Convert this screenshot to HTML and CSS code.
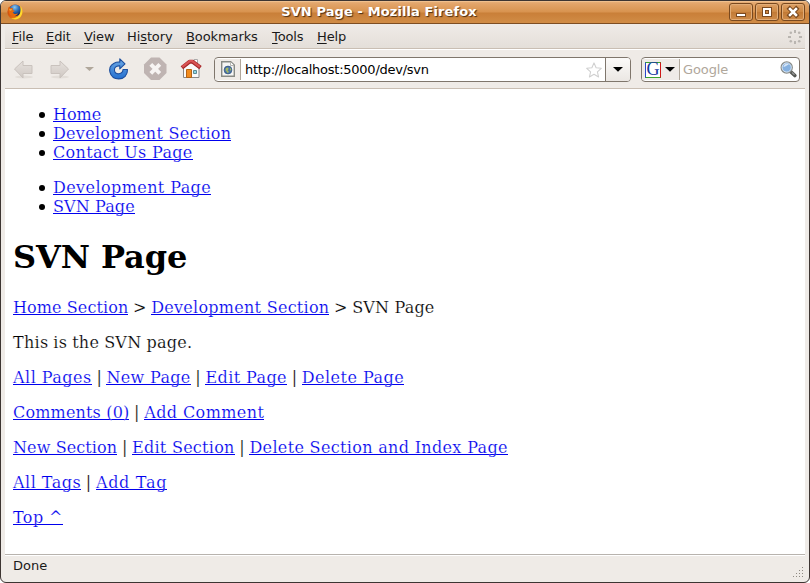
FILE: index.html
```
<!DOCTYPE html>
<html lang="en">
<head>
<meta charset="utf-8">
<title>SVN Page - Mozilla Firefox</title>
<link rel="stylesheet" href="styles.css">
</head>
<body>
<div class="window">
  <header class="titlebar">
    <svg class="app-icon" width="16" height="16" viewBox="0 0 16 16">
      <defs>
        <radialGradient id="globe" cx=".45" cy=".25" r=".7"><stop offset="0" stop-color="#8cc8f0"/><stop offset=".5" stop-color="#2f70b8"/><stop offset="1" stop-color="#12285e"/></radialGradient>
        <linearGradient id="fox" x1="0" y1="0" x2="1" y2="1"><stop offset="0" stop-color="#b83a10"/><stop offset=".5" stop-color="#e06010"/><stop offset="1" stop-color="#f4a010"/></linearGradient>
      </defs>
      <circle cx="8" cy="8" r="7.6" fill="url(#fox)"/>
      <circle cx="8.2" cy="6.3" r="5.9" fill="url(#globe)"/>
      <path d="M13.2 1.8C16 5 16.3 9.500 13.500 13C11 16 6.500 16 3.500 14C8 15 12.500 13 13.300 8C13.700 5.500 13.500 3.500 13.200 1.800Z" fill="#ffd92e"/>
      <path d="M1.600 2.800L3.200 4.200L6 4.100L5.500 6L8 7L5.800 8.200C6.500 10.200 8.700 10.500 11 9.200C9.500 13 4.500 13 2.500 10C1 7.500 1 5 1.600 2.800Z" fill="#e8690c"/>
      <path d="M2 5L5 4.900L4.600 6.200L3 7Z" fill="#f8a030"/>
    </svg>
    <div class="title">SVN Page - Mozilla Firefox</div>
    <div class="controls">
      <span class="control"><svg width="22" height="16" viewBox="0 0 22 16"><path d="M6 9h10v4H6z" fill="#7b4a20"/><path d="M7 10h8v2H7z" fill="#fff"/></svg></span>
      <span class="control"><svg width="22" height="16" viewBox="0 0 22 16"><path d="M6 3h10v10H6z" fill="#7b4a20"/><path fill="#fff" d="M7 4h8v8H7z"/><path fill="#7b4a20" d="M9 6h4v4H9z"/><path d="M10 7h2v2h-2z" fill="#cf8946"/></svg></span>
      <span class="control"><svg width="22" height="16" viewBox="0 0 22 16"><path d="M7.800 4.800l6.400 6.400m0-6.400l-6.400 6.400" stroke="#7b4a20" stroke-width="4.600" stroke-linecap="square"/><path d="M8 5l6 6m0-6l-6 6" stroke="#fff" stroke-width="2.500" stroke-linecap="square"/></svg></span>
    </div>
  </header>
  <nav class="menubar">
    <span class="menu m-file"><u>F</u>ile</span>
    <span class="menu m-edit"><u>E</u>dit</span>
    <span class="menu m-view"><u>V</u>iew</span>
    <span class="menu m-history">Hi<u>s</u>tory</span>
    <span class="menu m-bookmarks"><u>B</u>ookmarks</span>
    <span class="menu m-tools"><u>T</u>ools</span>
    <span class="menu m-help"><u>H</u>elp</span>
    <svg class="throbber" width="14" height="14" viewBox="0 0 14 14" fill="#b9b5b0">
      <rect x="6" y="0" width="2" height="3"/><rect x="6" y="11" width="2" height="3"/><rect x="0" y="6" width="3" height="2"/><rect x="11" y="6" width="3" height="2"/>
      <circle cx="2.800" cy="2.800" r="1.300"/><circle cx="11.200" cy="2.800" r="1.300"/><circle cx="2.800" cy="11.200" r="1.300"/><circle cx="11.200" cy="11.200" r="1.300"/>
    </svg>
  </nav>
  <div class="toolbar">
    <svg class="buttons" width="209" height="38" viewBox="0 0 209 38">
      <defs>
        <linearGradient id="reload" x1="0" y1="0" x2="0" y2="1"><stop offset="0" stop-color="#6da8e4"/><stop offset="1" stop-color="#2470d0"/></linearGradient>
        <linearGradient id="arrow" x1="0" y1="0" x2="0" y2="1"><stop offset="0" stop-color="#e6e1dd"/><stop offset="1" stop-color="#cfc8c3"/></linearGradient>
      </defs>
      <ellipse cx="19" cy="27" rx="9" ry="1.500" fill="#e2ddd8"/>
      <ellipse cx="55" cy="27" rx="9" ry="1.500" fill="#e2ddd8"/>
      <path d="M9.500 19L18 11v4.500h9v8h-9v4.500z" fill="url(#arrow)" stroke="#c9c2bd"/>
      <path d="M63.500 19L55 11v4.500h-9v8h9v4.500z" fill="url(#arrow)" stroke="#c9c2bd"/>
      <path d="M80 17h9l-4.500 4z" fill="#b0a79b"/>
      <path d="M114.800 8.800l5.200 5-5.200 5v-2.900c-4-.3-5.800 2.200-5.300 4.800.8 4.600 8.300 4 8.500-1.200h4.500c.2 5.600-3.500 9.400-8.700 9.400-10 0-11.700-12-5.100-15.500 1.800-1 4-1.500 6.100-1.300z" fill="url(#reload)" stroke="#1d4f9e" stroke-width="1.100" stroke-linejoin="round"/>
      <path d="M146 7.500h8.500l7 7V23l-7 7H146l-7-7v-8.500z" fill="#bfb4b2"/>
      <path d="M145.800 14.300l9 9m0-9l-9 9" stroke="#f7f4f3" stroke-width="4"/>
      <path d="M189 9.500h3.500V15H189z" fill="#fff" stroke="#aaa"/>
      <path d="M178.500 18l7.500-6 8 6v9.500h-15.500z" fill="#fafafa" stroke="#888"/>
      <path d="M176.900 17.700l7.600-6h3l8 6" fill="none" stroke="#a8292b" stroke-width="4" stroke-linejoin="round"/>
      <path d="M177.300 16.900l7.500-5.700h2.400l7.600 5.700" fill="none" stroke="#d95454" stroke-width="2.200"/>
      <path d="M181.500 19.500h5v8h-5z" fill="#f28c1e" stroke="#b56314"/>
      <path d="M188.500 20.500h3v3h-3z" fill="#8fd9e8" stroke="#5d8b94"/>
    </svg>
    <div class="address">
      <span class="site"><svg width="14" height="16" viewBox="0 0 14 16"><path d="M.7.700h9L13.300 4v11.300H.7z" fill="#f6f6f4" stroke="#888a85" stroke-width="1.400"/><path d="M9.500 1v3.500H13" fill="#fff" stroke="#b5b5b0"/><circle cx="7" cy="9" r="3.900" fill="#4c76a9" stroke="#2d4e78" stroke-width=".7"/><path d="M5 7l2-.5.7 1.500L6.500 9.300 8 11 6.500 12 4.500 9zM9 6.500l1.300 2L9 10z" fill="#a7b960"/></svg></span>
      <span class="url">http://localhost:5000/dev/svn</span>
      <svg class="star" width="16" height="16" viewBox="0 0 16 16"><path d="M8 .9l2.100 4.900 5.200.5-3.900 3.500 1.200 5.200L8 12.300 3.400 15l1.200-5.200L.7 6.300l5.200-.5z" fill="#fff" stroke="#d0d0d0" stroke-width="1.100" stroke-linejoin="round"/></svg>
      <span class="drop"><svg width="10" height="5" viewBox="0 0 10 5"><path d="M0 0h10L5 4.700z"/></svg></span>
    </div>
    <div class="search">
      <span class="engine">
        <span class="google">G</span>
        <svg width="10" height="5" viewBox="0 0 10 5"><path d="M0 0h10L5 4.700z"/></svg>
      </span>
      <span class="hint">Google</span>
      <svg class="lens" width="17" height="17" viewBox="0 0 17 17"><path d="M10.500 10.500l4.300 4" stroke="#555753" stroke-width="3.600" stroke-linecap="round"/><path d="M12 11.500l2.500 2.300" stroke="#999" stroke-width="1.200"/><circle cx="6.700" cy="6.500" r="5.600" fill="#86b1e0" stroke="#888a85" stroke-width="1.200"/><circle cx="6.700" cy="6.500" r="4.600" fill="none" stroke="#e9eef4" stroke-width=".8"/><path d="M3.500 6c.3-3 3.500-4 5.500-2.500C7 4 6 5.500 3.500 6z" fill="#d5e5f6"/></svg>
    </div>
  </div>
  <main class="page">
    <ul>
      <li><a href="#">Home</a></li>
      <li><a class="s3" href="#">Development Section</a></li>
      <li><a class="s4" href="#">Contact Us Page</a></li>
    </ul>
    <ul>
      <li><a class="s5" href="#">Development Page</a></li>
      <li><a class="s1" href="#">SVN Page</a></li>
    </ul>
    <h1>SVN Page</h1>
    <p><a class="s1" href="#">Home Section</a> &gt; <a class="s3" href="#">Development Section</a> &gt; <span class="s2">SVN Page</span></p>
    <p class="s3">This is the SVN page.</p>
    <p><a class="s6" href="#">All Pages</a> | <a class="s4" href="#">New Page</a> | <a class="s5" href="#">Edit Page</a> | <a class="s6" href="#">Delete Page</a></p>
    <p><a class="s2" href="#">Comments (0)</a> | <a class="s5" href="#">Add Comment</a></p>
    <p><a class="s1" href="#">New Section</a> | <a class="s3" href="#">Edit Section</a> | <a class="s4" href="#">Delete Section and Index Page</a></p>
    <p><a class="s6" href="#">All Tags</a> | <a class="s7" href="#">Add Tag</a></p>
    <p><a class="s5" href="#">Top ^</a></p>
  </main>
  <footer class="status">
    <span>Done</span>
    <svg class="grip" width="12" height="12" viewBox="0 0 12 12"><path d="M10 1h1v1h-1zM7 4h1v1H7zM10 4h1v1h-1zM4 7h1v1H4zM7 7h1v1H7zM10 7h1v1h-1zM1 10h1v1H1zM4 10h1v1H4zM7 10h1v1H7zM10 10h1v1h-1z" fill="#8f8a83"/></svg>
  </footer>
</div>
</body>
</html>
```
FILE: styles.css
```
* { box-sizing: border-box; }
html { background: #fff; }
body { margin: 0; }
svg { display: block; flex: none; }

.window {
  width: 810px;
  height: 583px;
  display: flex;
  flex-direction: column;
  overflow: hidden;
  border: 1px solid #3d3532;
  border-radius: 6px;
  background: #efebe7;
  font: 13px/16px "DejaVu Sans", sans-serif;
  color: #1a1a1a;
}

.titlebar {
  height: 23px;
  flex: none;
  display: flex;
  align-items: center;
  padding: 0 4px 0 6px;
  background: linear-gradient(#e9b27c 0, #e2a469 3px, #d8934f 11px, #c97f38 12px, #d08b45 21px);
  border-bottom: 1px solid #7d4d22;
  box-shadow: inset 0 1px #f0c08e;
}
.title {
  flex: 1;
  padding-left: 6px;
  text-align: center;
  font-weight: bold;
  letter-spacing: .1px;
  color: #fff;
  text-shadow: 1px 1px 1px #4a2c12;
}
.controls { display: flex; gap: 2px; }
.control {
  width: 24px;
  height: 18px;
  border: 1px solid #79491f;
  border-radius: 3px;
  box-shadow: inset 0 0 0 1px #e2ad78;
  background: linear-gradient(#dea066, #cd8842 50%, #c27a36 51%, #cf8c49);
}

.menubar {
  height: 25px;
  flex: none;
  margin: 0 4px;
  padding: 2px 0 0 7px;
  display: flex;
  align-items: center;
  background: linear-gradient(#efebe7, #e4dfd9);
  border-bottom: 1px solid #c9beb3;
}
.menu { white-space: nowrap; flex: none; letter-spacing: -.1px; }
.menu u { text-underline-offset: 2px; text-decoration-thickness: 1px; text-decoration-skip-ink: none; }
.m-file { width: 34px; }
.m-edit { width: 38px; }
.m-view { width: 43px; }
.m-history { width: 59px; letter-spacing: -.1px; }
.m-bookmarks { width: 86px; }
.m-tools { width: 45px; }
.throbber { margin: 0 3px 0 auto; }

.toolbar {
  height: 40px;
  flex: none;
  margin: 0 4px;
  display: flex;
  align-items: center;
  border-top: 1px solid #fff;
  border-bottom: 1px solid #c9beb3;
}
.address, .search {
  height: 25px;
  margin-top: 1px;
  display: flex;
  align-items: center;
  background: #fff;
  border: 1px solid #7f766c;
  border-radius: 4px;
  overflow: hidden;
}
.address { width: 417px; }
.site {
  width: 26px;
  height: 21px;
  padding: 2px 0 0 6px;
  background: #efebe7;
  border-right: 1px solid #b0a79b;
}
.url { flex: 1; padding-left: 4px; color: #000; letter-spacing: -.25px; }
.star { margin-right: 3px; }
.drop {
  width: 25px;
  height: 23px;
  display: grid;
  place-items: center;
  background: linear-gradient(#fbfaf9, #ebe7e3);
  border-left: 1px solid #7f766c;
}
.search { width: 159px; margin-left: 10px; }
.engine {
  width: 38px;
  height: 21px;
  padding-left: 3px;
  display: flex;
  align-items: center;
  gap: 4px;
  background: #efebe7;
  border-right: 1px solid #b0a79b;
}
.google {
  width: 16px;
  height: 16px;
  border: 1px solid;
  border-color: #3ba32c #d01818 #3ba32c #2848c8;
  background: #fff;
  color: #1838a0;
  font: 18px/13px "Liberation Serif", serif;
  display: flex;
  justify-content: center;
}
.hint { flex: 1; padding-left: 3px; color: #b0a79b; letter-spacing: -.1px; }
.lens { margin-right: 2px; }

.page {
  flex: 1;
  min-height: 0;
  margin: 0 4px;
  padding: 0 8px;
  overflow: hidden;
  background: #fff;
  color: #000;
  font: 16px/19px "DejaVu Serif", serif;
  -webkit-text-stroke: .18px #fff;
}
.page ul { margin: 16px 0; padding-left: 40px; list-style: none; }
.page li { position: relative; }
.page li::before {
  content: "";
  position: absolute;
  left: -14px;
  top: 7px;
  width: 6px;
  height: 6px;
  border-radius: 50%;
  background: #000;
}
.page h1 { margin: 22px 0 21px; font-size: 32px; line-height: 39px; font-weight: bold; letter-spacing: -.1px; -webkit-text-stroke: 0; }
.page p { margin: 16px 0; word-spacing: -.4px; }
.page p a, .page p span { word-spacing: 0; }
/* The rule is a background so that the outline on the glyphs leaves it solid. */
.page a {
  color: #0000ee;
  text-decoration: none;
  background: linear-gradient(#0000ee, #0000ee) 0 16px / 100% 1px no-repeat;
}
.page .s1 { letter-spacing: .1px; }
.page .s2 { letter-spacing: .17px; }
.page .s3 { letter-spacing: .27px; }
.page .s4 { letter-spacing: .33px; }
.page .s5 { letter-spacing: .41px; }
.page .s6 { letter-spacing: .48px; }
.page .s7 { letter-spacing: .7px; }

.status {
  height: 28px;
  flex: none;
  margin: 0 4px;
  padding: 0 1px 6px 8px;
  display: flex;
  align-items: center;
  justify-content: space-between;
  border-top: 1px solid #b8b3ae;
  box-shadow: inset 0 1px #fff;
}
.grip { margin-top: 12px; }
```
